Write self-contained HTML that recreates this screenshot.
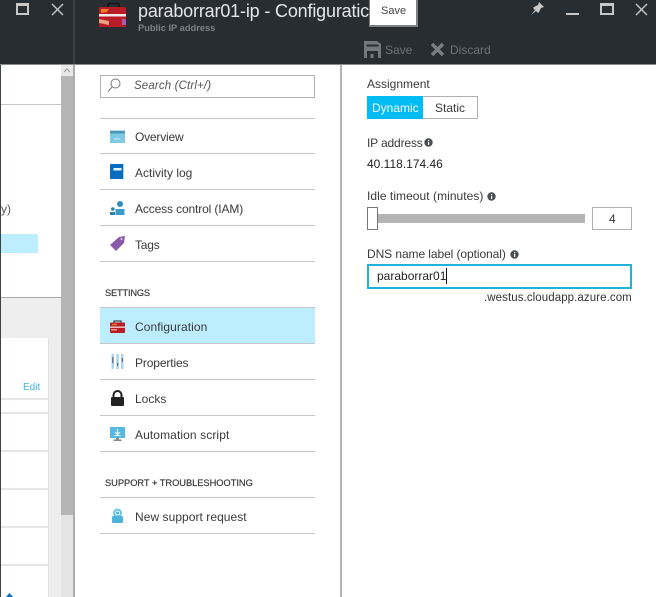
<!DOCTYPE html>
<html><head><meta charset="utf-8"><style>
html,body{margin:0;padding:0;background:#fff}
#p{position:relative;width:656px;height:597px;overflow:hidden;background:#fff;font-family:"Liberation Sans",sans-serif;font-size:12px;color:#3a3a3a}
#p div,#p span,#p svg{position:absolute}
.t{white-space:nowrap;line-height:16px}
.l{height:1px;background:#c6c6c6;left:100px;width:215px}
</style></head><body><div id="p">
<div style="left:0;top:0;width:656px;height:64px;background:#282d32"></div>
<div style="left:0;top:64px;width:656px;height:1px;background:#8a8d90"></div>
<div style="left:73px;top:0;width:2px;height:64px;background:#3a4046"></div>
<div style="left:0;top:65px;width:1px;height:532px;background:#3a4444"></div>

<svg style="left:15px;top:2px" width="16" height="14"><rect x="2" y="2" width="11" height="10" fill="none" stroke="#c8c8c8" stroke-width="2"/><rect x="1" y="1" width="13" height="3" fill="#c8c8c8"/></svg>
<svg style="left:50px;top:2px" width="15" height="14"><path d="M2 2L13 13M13 2L2 13" stroke="#c8c8c8" stroke-width="1.400"/></svg>

<svg style="left:98px;top:1px" width="30" height="27"><path d="M10 7V3.500Q10 2.500 11 2.500H20Q21 2.500 21 3.500V7" fill="none" stroke="#111" stroke-width="1.300"/><path d="M1 7Q1 6 3 6H25Q28 6 28 8V26H1Z" fill="#b81c26"/><rect x="1" y="13" width="27" height="2.500" fill="#f4e8e8"/><path d="M3 8L11 8L9 11L3 12Z" fill="#ef7a2c"/><path d="M1 18L11 20L11 24L1 22Z" fill="#ee9c86"/><rect x="24" y="18" width="4" height="6" fill="#a85ab0"/></svg>
<span class="t" style="left:138px;top:0;font-size:18px;line-height:22px;color:#e4e6e8;letter-spacing:-.17px">paraborrar01-ip - Configuratic</span>
<span class="t" style="left:138px;top:21px;font-size:9.300px;font-weight:bold;color:#7d8287;line-height:14px">Public IP address</span>

<div style="left:369px;top:-2px;width:46px;height:25px;background:#fff;border:solid #7f7f7f;border-width:2px 2px 2px 1px"></div>
<span class="t" style="left:381px;top:3px;font-size:11px;color:#444">Save</span>

<svg style="left:529px;top:2px" width="16" height="14"><path d="M10 0L15 5L12 6L10 10L9 11L4 6L5 5L9 3ZM6 8L2 13L7 9Z" fill="#c8c8c8"/></svg>
<div style="left:566px;top:13px;width:13px;height:2px;background:#c8c8c8"></div>
<svg style="left:600px;top:2px" width="15" height="14"><rect x="1" y="2" width="12" height="10" fill="none" stroke="#c8c8c8" stroke-width="2"/><rect x="0" y="1" width="14" height="3" fill="#c8c8c8"/></svg>
<svg style="left:633.500px;top:2px" width="15" height="14"><path d="M2 2L13 13M13 2L2 13" stroke="#c8c8c8" stroke-width="1.400"/></svg>

<svg style="left:364px;top:41px" width="17" height="17"><path d="M0 0H13L17 3V17H0Z" fill="#73787c"/><rect x="2.500" y="3.500" width="12" height="2" fill="#282d32"/><rect x="3" y="10" width="11" height="7" fill="#282d32"/><rect x="6.500" y="13" width="3" height="4" fill="#73787c"/></svg>
<span class="t" style="left:385px;top:42px;color:#6d7276">Save</span>
<svg style="left:430px;top:42px" width="15" height="15"><path d="M2 2L13 13M13 2L2 13" stroke="#7a7e82" stroke-width="3.400"/></svg>
<span class="t" style="left:450px;top:42px;color:#6d7276">Discard</span>

<!-- left blade -->
<div style="left:1px;top:104px;width:60px;height:1px;background:#c6c6c6"></div>
<span class="t" style="left:1px;top:201px;color:#555">y)</span>
<div style="left:1px;top:234px;width:37px;height:19px;background:#bdeeff"></div>
<div style="left:1px;top:297px;width:60px;height:1px;background:#a8a8a8"></div>
<div style="left:1px;top:298px;width:60px;height:299px;background:#eeeeee"></div>
<div style="left:1px;top:338px;width:47px;height:259px;background:#fff;border-right:1px solid #e2e2e2"></div>
<span class="t" style="left:23px;top:380px;font-size:10px;color:#3fb4dc">Edit</span>
<div style="left:1px;top:398px;width:47px;height:2px;background:#e6e6e6"></div>
<div style="left:1px;top:412px;width:47px;height:2px;background:#e6e6e6"></div>
<div style="left:1px;top:450px;width:47px;height:2px;background:#e6e6e6"></div>
<div style="left:1px;top:488px;width:47px;height:2px;background:#e6e6e6"></div>
<div style="left:1px;top:526px;width:47px;height:2px;background:#e6e6e6"></div>
<div style="left:1px;top:564px;width:47px;height:2px;background:#e6e6e6"></div>
<svg style="left:6px;top:593px" width="7" height="4"><path d="M0 4L3.500 0L7 4Z" fill="#0b6fbe"/></svg>

<!-- scrollbar -->
<div style="left:61px;top:65px;width:12px;height:11px;background:#e8e8e8"></div>
<svg style="left:61px;top:65px" width="12" height="11"><path d="M3 7L6 4L9 7" fill="none" stroke="#9a9a9a"/></svg>
<div style="left:61px;top:76px;width:12px;height:439px;background:#b5b5b5"></div>
<div style="left:61px;top:515px;width:12px;height:82px;background:#e4e4e4"></div>
<div style="left:73px;top:65px;width:2px;height:532px;background:#adadad"></div>

<!-- menu -->
<div style="left:100px;top:75px;width:213px;height:21px;border:1px solid #b4b4b4"></div>
<svg style="left:107px;top:78px" width="16" height="15"><circle cx="8.500" cy="5.500" r="4.500" fill="none" stroke="#777"/><path d="M5 9L1 13.500" stroke="#777"/></svg>
<span class="t" style="left:134px;top:78px;font-size:11.500px;font-style:italic;color:#555;letter-spacing:.14px">Search (Ctrl+/)</span>
<div class="l" style="top:118px"></div>

<svg style="left:110px;top:130px" width="15" height="13"><rect width="15" height="13" fill="#7fc8e6"/><rect x="0" y="1" width="15" height="2.500" fill="#4c96b6"/><rect x="0" y="0" width="15" height="1" fill="#bcdcea"/><rect x="4" y="8.500" width="6" height="1" fill="#d6eef8"/></svg>
<span class="t" style="left:135px;top:129px;letter-spacing:-.2px">Overview</span>
<div class="l" style="top:153px"></div>

<svg style="left:110px;top:164px" width="15" height="15"><rect width="14" height="15" rx="1" fill="#0a6cc0"/><rect x="3.500" y="4" width="8" height="2.500" fill="#e8f4fc"/><rect x="13" y="0" width="1" height="15" fill="#a9d4ef"/></svg>
<span class="t" style="left:135px;top:165px">Activity log</span>
<div class="l" style="top:189px"></div>

<svg style="left:110px;top:200px" width="15" height="16"><circle cx="10" cy="4" r="3" fill="#2f8fc4"/><path d="M5.500 15V9H14.500V15Z" fill="#3a9acc"/><circle cx="2.800" cy="9" r="1.800" fill="#2f7fb0"/><path d="M0 15V12H5V15Z" fill="#2f7fb0"/></svg>
<span class="t" style="left:135px;top:201px;letter-spacing:-.13px">Access control (IAM)</span>
<div class="l" style="top:225px"></div>

<svg style="left:110px;top:236px" width="15" height="16"><path d="M0 9L9 1L15 0L14 7L6 15Z" fill="#8a59a8"/><circle cx="11.500" cy="3" r="1" fill="#e6d8ee"/></svg>
<span class="t" style="left:135px;top:237px;letter-spacing:-.2px">Tags</span>
<div class="l" style="top:261px"></div>

<span class="t" style="left:105px;top:285px;font-size:9.300px;color:#333;letter-spacing:-.2px;-webkit-text-stroke:.15px #333">SETTINGS</span>
<div class="l" style="top:307px"></div>
<div style="left:100px;top:308px;width:215px;height:35px;background:#bdeeff"></div>
<svg style="left:110px;top:320px" width="15" height="13"><path d="M4 3V1H11V3" fill="none" stroke="#222"/><rect x="0" y="2.500" width="15" height="10.500" rx="1" fill="#b81c26"/><rect x="0" y="6.500" width="15" height="1.300" fill="#f2dcdc"/><rect x="2" y="3.800" width="5" height="1.500" fill="#ef7a2c"/><rect x="1" y="9" width="6" height="1.500" fill="#ee9c86"/></svg>
<span class="t" style="left:135px;top:319px;letter-spacing:.08px">Configuration</span>
<div class="l" style="top:343px"></div>

<svg style="left:111px;top:354px" width="13" height="15"><rect x="0.500" y="0" width="2.500" height="15" fill="#a9d4e8"/><rect x="5.300" y="0" width="2.500" height="15" fill="#a9d4e8"/><rect x="10" y="0" width="2.500" height="15" fill="#a9d4e8"/><rect x="1.200" y="3" width="1.200" height="6" fill="#666"/><rect x="6" y="9" width="1.200" height="3" fill="#666"/><rect x="10.700" y="4" width="1.200" height="4" fill="#666"/></svg>
<span class="t" style="left:135px;top:355px;letter-spacing:-.13px">Properties</span>
<div class="l" style="top:379px"></div>

<svg style="left:110px;top:390px" width="15" height="16"><path d="M3.500 7V5A4 4 0 0 1 11.500 5V7" fill="none" stroke="#222" stroke-width="2"/><rect x="1" y="7" width="13" height="9" rx="1" fill="#222"/></svg>
<span class="t" style="left:135px;top:391px">Locks</span>
<div class="l" style="top:415px"></div>

<svg style="left:110px;top:427px" width="15" height="14"><rect width="15" height="11" fill="#55b8e0"/><path d="M7.500 2V7M5 5L7.500 7.500L10 5M4.500 8.500H10.500" fill="none" stroke="#fff"/><rect x="6" y="11" width="3" height="1.500" fill="#888"/><rect x="3.500" y="12.500" width="8" height="1.500" fill="#888"/></svg>
<span class="t" style="left:135px;top:427px;letter-spacing:.1px">Automation script</span>
<div class="l" style="top:451px"></div>

<span class="t" style="left:105px;top:475px;font-size:9.300px;color:#333;letter-spacing:-.03px;-webkit-text-stroke:.15px #333">SUPPORT + TROUBLESHOOTING</span>
<div class="l" style="top:497px"></div>
<svg style="left:112px;top:508px" width="11" height="15"><circle cx="5.500" cy="5" r="4.500" fill="#6cc4e4"/><circle cx="5.500" cy="5" r="2.400" fill="#fff"/><rect x="0" y="8" width="11" height="7" rx="1" fill="#4fb2da"/><circle cx="5.500" cy="5" r="1.500" fill="#4fb2da"/></svg>
<span class="t" style="left:135px;top:509px;letter-spacing:.05px">New support request</span>
<div class="l" style="top:533px"></div>

<div style="left:340px;top:65px;width:2px;height:532px;background:#b4b4b4"></div>

<!-- form -->
<span class="t" style="left:367px;top:76px">Assignment</span>
<div style="left:367px;top:96px;width:111px;height:23px;border:1px solid #b0b0b0;box-sizing:border-box"></div>
<div style="left:367px;top:96px;width:56px;height:23px;background:#00bcf2"></div>
<span class="t" style="left:372px;top:100px;color:#fff">Dynamic</span>
<span class="t" style="left:435px;top:100px;color:#3a3a3a">Static</span>

<span class="t" style="left:367px;top:135px;letter-spacing:-.15px">IP address</span>
<svg style="left:424px;top:138px" width="9" height="9"><circle cx="4.500" cy="4.500" r="4.200" fill="#4a4f54"/><rect x="4" y="2" width="1.200" height="1.200" fill="#fff"/><rect x="4" y="4" width="1.200" height="3" fill="#fff"/></svg>
<span class="t" style="left:367px;top:156px;color:#222">40.118.174.46</span>

<span class="t" style="left:367px;top:188px;letter-spacing:.05px">Idle timeout (minutes)</span>
<svg style="left:487px;top:192px" width="9" height="9"><circle cx="4.500" cy="4.500" r="4.200" fill="#4a4f54"/><rect x="4" y="2" width="1.200" height="1.200" fill="#fff"/><rect x="4" y="4" width="1.200" height="3" fill="#fff"/></svg>
<div style="left:378px;top:214px;width:207px;height:9px;background:#b4b4b4"></div>
<div style="left:367px;top:207px;width:11px;height:23px;box-sizing:border-box;border:1px solid #777;background:#fff"></div>
<div style="left:592px;top:207px;width:40px;height:23px;box-sizing:border-box;border:1px solid #b0b0b0;background:#fff"></div>
<span class="t" style="left:609px;top:211px;color:#333">4</span>

<span class="t" style="left:367px;top:246px;letter-spacing:-.08px">DNS name label (optional)</span>
<svg style="left:510px;top:250px" width="9" height="9"><circle cx="4.500" cy="4.500" r="4.200" fill="#4a4f54"/><rect x="4" y="2" width="1.200" height="1.200" fill="#fff"/><rect x="4" y="4" width="1.200" height="3" fill="#fff"/></svg>
<div style="left:367px;top:264px;width:265px;height:25px;box-sizing:border-box;border:2px solid #1fb3dc;background:#fff"></div>
<span class="t" style="left:377px;top:268px;color:#222">paraborrar01</span>
<div style="left:446px;top:268px;width:1px;height:16px;background:#111"></div>
<span class="t" style="left:484px;top:290px;font-size:11.500px;color:#333;letter-spacing:.08px">.westus.cloudapp.azure.com</span>
</div></body></html>
